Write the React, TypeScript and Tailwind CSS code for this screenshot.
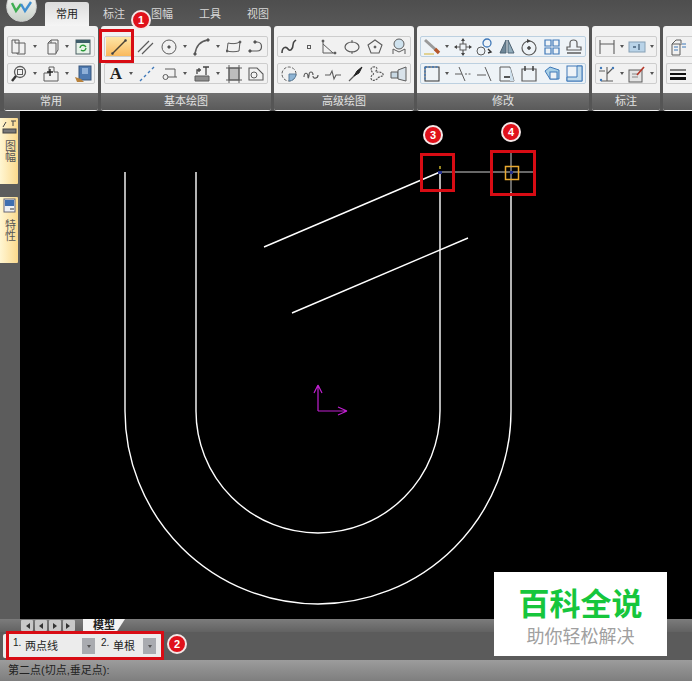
import type { ReactNode } from 'react';

const font = 'font-["Liberation_Sans","Noto_Sans_CJK_SC",sans-serif]';

function Ico({ children, w = 18 }: { children: ReactNode; w?: number }) {
  return (
    <svg
      width={w}
      height={18}
      viewBox={`0 0 ${w} 18`}
      fill="none"
      stroke="#5c5c5c"
      strokeWidth={1}
      className="shrink-0"
    >
      {children}
    </svg>
  );
}

function Arrow() {
  return <span className="h-0 w-0 shrink-0 border-x-[2.5px] border-t-[3px] border-x-transparent border-t-[#555]" />;
}

function Group({ children, tint, className }: { children: ReactNode; tint?: boolean; className?: string }) {
  return (
    <div
      className={`flex h-[21px] items-center justify-between rounded-[2px] border px-[2px] ${
        tint ? 'border-[#bcd0e0] bg-[#eef3f7]' : 'border-[#cdcdcd] bg-[#f1f1f1]'
      } ${className ?? ''}`}
    >
      {children}
    </div>
  );
}

function Panel({ label, width, rows }: { label: string; width: string; rows: ReactNode }) {
  return (
    <div className={`flex h-full shrink-0 flex-col overflow-hidden rounded-[3px] bg-[#f2f2f2] ${width}`}>
      <div className="flex h-[67px] flex-col gap-[6px] px-[3px] pt-[10px]">{rows}</div>
      <div className="flex h-[17px] items-center justify-center bg-gradient-to-b from-[#707070] to-[#5a5a5a] text-[11px] leading-none text-[#e4e4e4]">
        {label}
      </div>
    </div>
  );
}

function Badge({ n, className }: { n: string; className: string }) {
  return (
    <div
      className={`absolute flex h-[20px] w-[20px] items-center justify-center rounded-full border-2 border-[#f4e6e6] bg-[#e0101a] text-[11px] leading-none font-bold text-white ${className}`}
    >
      {n}
    </div>
  );
}

function RedBox({ className }: { className: string }) {
  return <div className={`absolute border-[3px] border-[#d80c14] ${className}`} />;
}

function Tab({ label, active }: { label: string; active?: boolean }) {
  if (active) {
    return (
      <div className="flex h-[24px] w-[44px] items-center justify-center rounded-t-[3px] bg-gradient-to-b from-[#dcdcdc] to-[#f5f5f5] text-[11px] text-[#222]">
        {label}
      </div>
    );
  }
  return <div className="flex h-[24px] w-[24px] items-center justify-center text-[11px] text-[#d8d8d8]">{label}</div>;
}

function SideTab({ label, h, icon }: { label: string; h: string; icon: ReactNode }) {
  return (
    <div className={`flex w-[18px] flex-col items-center gap-[6px] rounded-r-[1px] bg-gradient-to-r from-[#fff6d2] to-[#fbd98c] pt-[1px] ${h}`}>
      {icon}
      <span className="text-[11px] leading-[13px] text-[#555] [writing-mode:vertical-rl]">{label}</span>
    </div>
  );
}

function NavBtn({ d }: { d: string }) {
  return (
    <div className="flex h-[11px] w-[12px] items-center justify-center rounded-[1px] bg-[#c8c8c8]">
      <svg width="8" height="8" viewBox="0 0 8 8" fill="#333">
        <path d={d} />
      </svg>
    </div>
  );
}

function Combo({ n, text, w }: { n: string; text: string; w: string }) {
  return (
    <div className={`flex h-[22px] items-center ${w}`}>
      <span className="w-[11px] self-start text-[10px] leading-[16px] text-[#222]">{n}</span>
      <span className="flex-1 pl-[1px] text-[11px] text-[#222]">{text}</span>
      <span className="flex h-[16px] w-[13px] items-center justify-center bg-[#a9abb0]">
        <Arrow />
      </span>
    </div>
  );
}

export default function App() {
  return (
    <div className={`relative flex h-[681px] w-[692px] flex-col overflow-hidden bg-[#555] ${font}`}>
      {/* title tabs */}
      <div className="flex h-[26px] shrink-0 items-end bg-gradient-to-b from-[#4e4e4e] to-[#585858] pl-[45px]">
        <Tab label="常用" active />
        <div className="ml-[13px] flex gap-[24px]">
          <Tab label="标注" />
          <Tab label="图幅" />
          <Tab label="工具" />
          <Tab label="视图" />
        </div>
      </div>

      {/* ribbon */}
      <div className="flex h-[85px] shrink-0 gap-[3px] overflow-hidden bg-[#555] pl-[4px]">
        <Panel
          label="常用"
          width="w-[94px]"
          rows={
            <>
              <Group>
                <Ico>
                  <path d="M2 2h7v13H2zM9 5h6v11H7v-1" />
                  <path d="M5 2v3h4" />
                </Ico>
                <Arrow />
                <Ico>
                  <path d="M6 5h8v11H6zM6 5l3-3h7v10l-2 3" />
                  <path d="M9 2v3" />
                </Ico>
                <Arrow />
                <Ico>
                  <rect x="2" y="2" width="14" height="14" fill="#e6f2e8" stroke="#4a5f62" />
                  <path d="M2 2h14v3H2z" fill="#3d5c6a" stroke="none" />
                  <path d="M6 10a3 3 0 0 1 5-2l1 1M12 10a3 3 0 0 1-5 2" stroke="#2c9a3a" strokeWidth={1.4} />
                </Ico>
              </Group>
              <Group>
                <Ico>
                  <circle cx="10" cy="7" r="5.5" strokeWidth={1.3} />
                  <rect x="7.5" y="4.5" width="5" height="5" />
                  <path d="M6 11l-4 5" stroke="#333" strokeWidth={2.4} />
                </Ico>
                <Arrow />
                <Ico>
                  <path d="M7 2h5v5h4v9H2V8h5z" />
                  <path d="M8 4v7M5 7h6" stroke="#222" strokeWidth={1.4} />
                </Ico>
                <Arrow />
                <Ico>
                  <rect x="5" y="1" width="12" height="14" fill="#4f7ab0" stroke="#39567c" />
                  <rect x="8" y="3" width="6" height="6" fill="#8fb0d8" stroke="none" />
                  <path d="M1 12l6 2 3 3H3z" fill="#b8823c" stroke="none" />
                </Ico>
              </Group>
            </>
          }
        />
        <Panel
          label="基本绘图"
          width="w-[170px]"
          rows={
            <>
              <Group className="pl-[1px]">
                <div className="flex h-[19px] w-[25px] shrink-0 items-center justify-center bg-gradient-to-b from-[#fde6a6] to-[#f9b95c]">
                  <Ico>
                    <path d="M2 16L16 2" stroke="#4b4232" strokeWidth={1.4} />
                    <circle cx="2.5" cy="15.5" r="1" fill="#4b4232" />
                    <circle cx="15.5" cy="2.5" r="1" fill="#4b4232" />
                  </Ico>
                </div>
                <Ico>
                  <path d="M2 14L13 3M6 16L17 5" strokeWidth={1.2} />
                </Ico>
                <Ico>
                  <circle cx="9" cy="9" r="7" />
                  <circle cx="9" cy="9" r="1.2" fill="#444" />
                </Ico>
                <Arrow />
                <Ico>
                  <path d="M2 16C3 8 8 3 15 2" strokeWidth={1.5} />
                  <circle cx="2" cy="16" r="1.2" fill="#444" />
                  <circle cx="15" cy="2" r="1.2" fill="#444" />
                </Ico>
                <Arrow />
                <Ico w={16}>
                  <path d="M2 5c4 1 8 1 12-1l-1 9c-4 1-8 1-12 0z" />
                  <circle cx="14" cy="4" r="1" fill="#444" />
                  <circle cx="1" cy="13" r="1" fill="#444" />
                </Ico>
                <Ico>
                  <path d="M3 13h7c6 0 6-9 0-9H8" strokeWidth={1.2} />
                  <circle cx="3" cy="13" r="1.2" fill="#444" />
                  <circle cx="8" cy="4" r="1.2" fill="#444" />
                </Ico>
              </Group>
              <Group className="pl-[4px]">
                <span className="w-[14px] text-center font-['Liberation_Serif',serif] text-[17px] leading-none font-bold text-[#222]">A</span>
                <Arrow />
                <Ico>
                  <path d="M2 16l2-2M6 12l2-2" stroke="#3f78b8" strokeWidth={1.4} />
                  <path d="M10 8l2-2M14 4l2-2" stroke="#3f78b8" strokeWidth={1.4} />
                </Ico>
                <Ico w={16}>
                  <path d="M3 4h10v8H6" />
                  <circle cx="3.5" cy="12" r="2.5" />
                  <path d="M13 12l2 0" />
                </Ico>
                <Arrow />
                <Ico>
                  <path d="M2 11h14v5H2z" fill="#8d8d8d" />
                  <path d="M10 2h6M13 2v8M4 9V5h4M6 3v4" stroke="#444" strokeWidth={1.3} />
                </Ico>
                <Arrow />
                <Ico w={16}>
                  <rect x="3" y="3" width="10" height="12" fill="#bdbdbd" />
                  <path d="M3 0v18M13 0v18M0 3h16M0 15h16" />
                </Ico>
                <Ico>
                  <path d="M2 3h8l6 6v6H2z" strokeWidth={1.1} />
                  <circle cx="7" cy="10" r="3" />
                </Ico>
              </Group>
            </>
          }
        />
        <Panel
          label="高级绘图"
          width="w-[140px]"
          rows={
            <>
              <Group>
                <Ico>
                  <path d="M2 15c0-6 4-7 6-4s5 0 5-4 2-4 3-5" strokeWidth={1.6} stroke="#444" />
                </Ico>
                <Ico w={10}>
                  <rect x="3.5" y="7.5" width="3" height="3" />
                </Ico>
                <Ico>
                  <path d="M4 2v13h13M4 6l10 9" />
                  <circle cx="4" cy="3" r="1" fill="#444" />
                  <circle cx="16" cy="15" r="1" fill="#444" />
                </Ico>
                <Ico>
                  <ellipse cx="9" cy="9" rx="7" ry="5" strokeWidth={1.2} />
                  <path d="M9 2v3M9 13v3" />
                </Ico>
                <Ico>
                  <path d="M9 2l7 5-3 8H5L2 7z" strokeWidth={1.1} />
                  <circle cx="9" cy="9" r="1" fill="#444" />
                </Ico>
                <Ico>
                  <circle cx="9" cy="6" r="5" fill="#cfe2ee" />
                  <path d="M3 16v-5l6 3 6-3v5" />
                </Ico>
              </Group>
              <Group>
                <Ico>
                  <circle cx="9" cy="9" r="7" strokeDasharray="3 1.5" />
                  <path d="M9 9h7a7 7 0 0 1-7 7z" fill="#8eb4d4" stroke="#5c7f9c" />
                </Ico>
                <Ico>
                  <path d="M2 12c0-5 4-5 4 0M6 12c0 2 1 0 1-2 0-4 4-4 4 0M11 11c0 3 5 3 5-1" strokeWidth={1.2} />
                </Ico>
                <Ico>
                  <path d="M1 10h5l2-4 2 8 2-4h5" strokeWidth={1.1} />
                </Ico>
                <Ico>
                  <path d="M3 16l6-6" strokeWidth={1.2} />
                  <path d="M8 11l3-5 5-4-3 6z" fill="#222" stroke="#222" />
                </Ico>
                <Ico>
                  <path d="M5 2c4-1 5 2 3 4s6 0 7 3-4 2-5 4-7 4-7 0 4-3 2-5-3-5 0-6z" strokeDasharray="2 1" strokeWidth={1.2} />
                </Ico>
                <Ico>
                  <path d="M1 7h7v6H1z" fill="#c9d9e4" />
                  <path d="M8 5l8-3v14l-8-2z" fill="#d8e2ea" />
                </Ico>
              </Group>
            </>
          }
        />
        <Panel
          label="修改"
          width="w-[172px]"
          rows={
            <>
              <Group tint>
                <Ico>
                  <path d="M2 2l11 10" stroke="#9a9a9a" strokeWidth={3} />
                  <path d="M12 11l4 4" stroke="#b5562a" strokeWidth={3.4} />
                  <path d="M1 16h10" stroke="#d4b030" />
                </Ico>
                <Arrow />
                <Ico>
                  <path d="M9 1v16M1 9h16" strokeWidth={1.2} />
                  <rect x="6" y="6" width="6" height="6" fill="#eef3f7" />
                  <path d="M9 0l2 3H7zM9 18l2-3H7zM0 9l3-2v4zM18 9l-3-2v4z" fill="#444" stroke="none" />
                </Ico>
                <Ico>
                  <circle cx="11" cy="5" r="4" stroke="#3f78b8" strokeWidth={1.3} />
                  <circle cx="5" cy="13" r="4" />
                  <path d="M12 11l3 3-3 1" strokeWidth={1.4} stroke="#333" />
                </Ico>
                <Ico>
                  <path d="M8 2L2 15h6z" fill="#6f8798" stroke="#4f6474" />
                  <path d="M10 2l6 13h-6z" fill="#94aebd" stroke="#4f6474" />
                </Ico>
                <Ico>
                  <circle cx="9" cy="10" r="7" strokeWidth={1.2} />
                  <circle cx="9" cy="10" r="1.4" fill="#444" />
                  <path d="M7 1l4 2-4 2z" fill="#444" stroke="none" />
                </Ico>
                <Ico>
                  <path d="M2 2h6v6H2zM10 2h6v6h-6zM2 10h6v6H2zM10 10h6v6h-6z" stroke="#3f78b8" strokeWidth={1.2} />
                </Ico>
                <Ico>
                  <path d="M5 9V5c0-4 7-4 7 0v4h4v3H2V9z" strokeWidth={1.2} />
                  <path d="M2 15h14" strokeWidth={1.4} />
                </Ico>
              </Group>
              <Group tint>
                <Ico>
                  <rect x="2" y="2" width="14" height="14" stroke="#333" />
                  <path d="M2 2h14M2 2v14" stroke="#3f78b8" strokeWidth={1.4} strokeDasharray="2 1.5" />
                </Ico>
                <Arrow />
                <Ico>
                  <path d="M5 2l6 14" />
                  <path d="M1 9h7" />
                  <path d="M11 9h6" strokeDasharray="2 1.5" />
                </Ico>
                <Ico>
                  <path d="M1 10h9" strokeWidth={1.2} />
                  <path d="M9 2l6 14" />
                </Ico>
                <Ico>
                  <path d="M2 2h10l4 14H2z" />
                  <path d="M6 12h7" stroke="#222" strokeWidth={1.6} />
                  <path d="M12 2l4 14h-4z" fill="#cfe0ec" stroke="none" />
                </Ico>
                <Ico>
                  <path d="M2 4h14v12H2z" strokeWidth={1.2} />
                  <path d="M5 1v5M13 1v5" stroke="#333" strokeWidth={1.4} />
                </Ico>
                <Ico>
                  <path d="M2 6l5-4 9 3v9H7z" fill="#a7cfe6" stroke="#3f78b8" />
                  <rect x="7" y="7" width="7" height="7" fill="#eef3f7" stroke="#3f78b8" />
                </Ico>
                <Ico>
                  <rect x="2" y="1" width="15" height="15" stroke="#3f78b8" />
                  <path d="M2 12h10V1h5v15H2z" fill="#c3dcec" stroke="#3f78b8" />
                </Ico>
              </Group>
            </>
          }
        />
        <Panel
          label="标注"
          width="w-[68px]"
          rows={
            <>
              <Group>
                <Ico>
                  <path d="M2 2v14M16 2v14M2 6h14" strokeWidth={1.1} />
                </Ico>
                <Arrow />
                <Ico>
                  <rect x="1" y="4" width="16" height="10" fill="#b9d3e8" stroke="#86a0b5" />
                  <path d="M5 9h3M11 6v6" stroke="#45607a" strokeWidth={1.3} />
                </Ico>
                <Arrow />
              </Group>
              <Group>
                <Ico>
                  <path d="M1 6h6M9 2v14M3 16h12M9 9l6-6" strokeWidth={1.1} />
                  <circle cx="3" cy="3" r="1.2" fill="#3f78b8" stroke="none" />
                  <circle cx="3" cy="15" r="1.2" fill="#3f78b8" stroke="none" />
                  <circle cx="15" cy="3" r="1.2" fill="#3f78b8" stroke="none" />
                </Ico>
                <Arrow />
                <Ico>
                  <rect x="1" y="5" width="13" height="12" fill="#e4e4e4" />
                  <path d="M4 9h6M4 12h6" stroke="#888" />
                  <path d="M9 10l7-8" stroke="#b5382a" strokeWidth={1.6} />
                </Ico>
                <Arrow />
              </Group>
            </>
          }
        />
        <div className="flex h-full flex-1 flex-col overflow-hidden rounded-l-[3px] bg-[#f2f2f2]">
          <div className="flex h-[67px] flex-col gap-[6px] pt-[10px] pl-[3px]">
            <Group className="justify-start rounded-r-none border-r-0">
              <Ico>
                <path d="M3 6l4-4h5v5M3 6h8v11H3z" />
                <path d="M5 9h4M5 12h4M13 6h4M13 9h4" stroke="#3f78b8" />
              </Ico>
            </Group>
            <Group className="justify-start rounded-r-none border-r-0">
              <Ico>
                <path d="M1 5h16" stroke="#111" strokeWidth={1.2} />
                <path d="M1 9h16" stroke="#111" strokeWidth={2} />
                <path d="M1 13.5h16" stroke="#111" strokeWidth={3} />
              </Ico>
            </Group>
          </div>
          <div className="h-[17px] bg-gradient-to-b from-[#707070] to-[#5a5a5a]" />
        </div>
      </div>

      {/* side tabs and model space */}
      <div className="flex h-[508px] shrink-0">
        <div className="flex w-[20px] shrink-0 flex-col gap-[13px] bg-[#5c5c5c] pt-[7px]">
          <SideTab
            label="图幅"
            h="h-[66px]"
            icon={
              <svg width="15" height="15" viewBox="0 0 15 15" fill="none" stroke="#444">
                <path d="M1 8l3-5M9 2h5M11 2v5" />
                <rect x="1" y="10" width="13" height="4" fill="#777" />
              </svg>
            }
          />
          <SideTab
            label="特性"
            h="h-[66px]"
            icon={
              <svg width="13" height="15" viewBox="0 0 13 15">
                <rect x="1" y="1" width="11" height="13" fill="#eef0f4" stroke="#667" />
                <rect x="2" y="2" width="9" height="6" fill="#3f6fb0" />
                <path d="M7 11h4" stroke="#333" />
              </svg>
            }
          />
        </div>
        <div className="flex-1 bg-black">
          <svg viewBox="20 111 672 508" className="h-full w-full" fill="none" stroke="#ffffff" strokeWidth={1.4}>
            <path d="M125 172V411A193 193 0 0 0 511 411V192" />
            <path d="M196 172V411A122 122 0 0 0 440 411V172" />
            <path d="M264 247L440 172" />
            <path d="M292 313L468 238" />
            <path d="M440 172H535M511 152V192" stroke="#cfcfcf" strokeWidth={1} />
            <rect x="505.5" y="166.5" width="13" height="13" stroke="#e8a830" strokeWidth={1.5} />
            <rect x="438" y="171" width="4" height="3" fill="#22308c" stroke="none" />
            <path d="M440 166v3" stroke="#d8c030" />
            <rect x="510" y="171" width="3" height="3" fill="#22308c" stroke="none" />
            <path d="M318 411V385M318 411H347M318 385l-4 8M318 385l4 8M347 411l-9-4M347 411l-9 4" stroke="#c020d0" strokeWidth={1.2} />
          </svg>
        </div>
      </div>

      {/* layout tabs */}
      <div className="flex h-[13px] shrink-0 items-center gap-[2px] bg-gradient-to-b from-[#7c7c7c] to-[#626262] pl-[21px]">
        <NavBtn d="M1 1v6M7 1L3 4l4 3z" />
        <NavBtn d="M6 1L2 4l4 3z" />
        <NavBtn d="M2 1l4 3-4 3z" />
        <NavBtn d="M7 1v6M1 1l4 3-4 3z" />
        <div className="ml-[6px] flex h-[13px] w-[42px] items-center justify-center bg-[#f4f4f4] text-[11px] leading-none font-bold text-[#222] [clip-path:polygon(0_0,100%_0,80%_100%,0_100%)]">
          模型
        </div>
      </div>

      {/* command toolbar */}
      <div className="flex h-[28px] shrink-0 items-center bg-[#5b5b5b] pl-[3px]">
        <div className="flex h-[24px] w-[159px] items-center gap-[6px] rounded-[2px] bg-[#ececec] pr-[3px] pl-[10px]">
          <Combo n="1." text="两点线" w="w-[82px]" />
          <Combo n="2." text="单根" w="w-[55px]" />
        </div>
      </div>

      {/* status */}
      <div className="flex h-[21px] shrink-0 items-center bg-gradient-to-b from-[#9c9c9c] to-[#7e7e7e] pl-[8px] text-[11px] text-[#222]">
        第二点(切点,垂足点):
      </div>

      {/* logo */}
      <div className="absolute top-[-9px] left-[6px] flex h-[31px] w-[31px] items-center justify-center rounded-full border border-[#ccc] bg-gradient-to-b from-[#fafafa] to-[#c8d0c8]">
        <svg width="24" height="14" viewBox="0 0 24 14" fill="none" strokeWidth={2.4}>
          <path d="M2 3l4 8 5-7" stroke="#3fae52" />
          <path d="M11 4l4 7 6-9" stroke="#3f8fd0" />
        </svg>
      </div>

      {/* annotations */}
      <RedBox className="top-[29px] left-[99px] h-[34px] w-[35px]" />
      <RedBox className="top-[631px] left-[6px] h-[29px] w-[158px]" />
      <RedBox className="top-[153px] left-[420px] h-[39px] w-[35px]" />
      <RedBox className="top-[150px] left-[490px] h-[46px] w-[46px]" />
      <Badge n="1" className="top-[10px] left-[131px]" />
      <Badge n="2" className="top-[634px] left-[167px]" />
      <Badge n="3" className="top-[125px] left-[423px]" />
      <Badge n="4" className="top-[122px] left-[501px]" />

      {/* watermark */}
      <div className="absolute top-[572px] left-[494px] flex h-[84px] w-[173px] flex-col items-center bg-white pt-[15px]">
        <span className="text-[31px] leading-[36px] font-bold text-[#16c63c]">百科全说</span>
        <span className="mt-[4px] text-[18px] leading-[20px] text-[#a0a0a0]">助你轻松解决</span>
      </div>
    </div>
  );
}
